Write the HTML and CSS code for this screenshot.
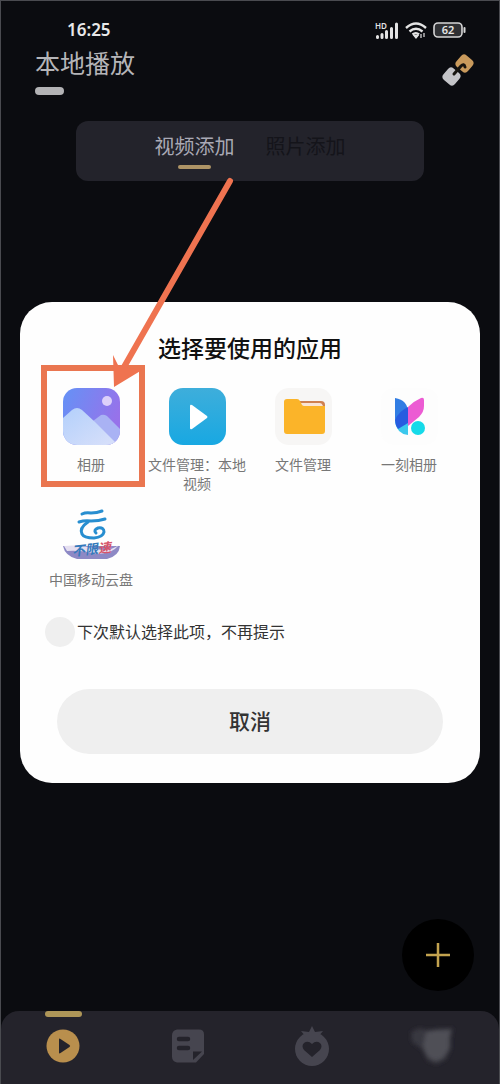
FILE: index.html
```
<!DOCTYPE html>
<html lang="zh-CN">

<head>
    <meta charset="UTF-8">
    <meta name="viewport" content="width=device-width, initial-scale=1.0">
    <title>本地播放</title>

    <link rel="stylesheet" href="styles.css">
</head>

<body>
    <div class="statusbar">
        <span class="time">16:25</span>
        <div class="signals">
            <svg width="25" height="22" viewBox="0 0 25 22">
                <text class="hd" x="1" y="10">HD</text>
                <path d="M3.500 18.500v-1M8 18.500v-3M12.500 18.500v-6M17.500 18.500v-9M22.500 18.500V5" stroke="#e4e4e4" stroke-width="3" stroke-linecap="round" />
            </svg>
            <svg width="22" height="18" viewBox="0 0 22 18" fill="none" stroke="#e4e4e4" stroke-width="2.400">
                <path d="M1 7Q11-2 21 7M4.500 10.500Q11 5 17.500 10.500M7.500 13.500Q11 11 14 13.500" />
                <path d="M9 14.500h4L11 17zM16 13v4M19 12v4" stroke-width="1.200" fill="#e4e4e4" />
            </svg>
            <svg width="33" height="16" viewBox="0 0 33 16">
                <rect x="1" y="1" width="28" height="14" rx="4" fill="#303134" stroke="#d6d6d6" stroke-width="1.600" />
                <path d="M31.500 6v4" stroke="#d6d6d6" stroke-width="2" stroke-linecap="round" />
                <text class="level" x="15" y="12" text-anchor="middle">62</text>
            </svg>
        </div>
    </div>

    <header class="header">
        <h1>本地播放</h1>
        <button type="button" class="link" aria-label="链接">
            <svg width="32" height="32" viewBox="0 0 32 32">
                <rect x="15" y="2" width="15" height="15" rx="4" transform="rotate(40 22.500 9.500)" fill="#c99a5c" />
                <rect x="2" y="15" width="15" height="15" rx="4" transform="rotate(40 9.500 22.500)" fill="#c4c4c8" />
                <path d="M12 20l7-8q3-3 4 1" fill="none" stroke="#17140f" stroke-width="3" stroke-linecap="round" />
            </svg>
        </button>
    </header>

    <div class="tabs">
        <button type="button" class="tab active">视频添加</button>
        <button type="button" class="tab">照片添加</button>
    </div>

    <button type="button" class="fab" aria-label="添加">
        <svg width="26" height="26" viewBox="0 0 26 26">
            <path d="M13 1v24M1 13h24" stroke="#c3a34f" stroke-width="2.500" />
        </svg>
    </button>

    <nav class="nav">
        <a href="#" class="active" aria-label="播放">
            <svg width="34" height="34" viewBox="0 0 34 34">
                <circle cx="17" cy="17" r="16.500" fill="#b98f4d" />
                <path d="M13 10.500v13q0 1.500 1.500.500l9-6q1.200-1 0-2l-9-6q-1.500-1-1.500.500z" fill="#24232b" />
            </svg>
        </a>
        <a href="#" aria-label="列表">
            <svg width="34" height="34" viewBox="0 0 34 34">
                <path d="M6 0.500h22q5 0 5 5V25L25 33.500H6q-5-1-5-6v-21q0-5 5-6z" fill="#46454f" />
                <path d="M8 10h9M8 19h9" stroke="#24232b" stroke-width="4.500" stroke-linecap="round" />
                <path d="M22 31v-8.500h9z" fill="#24232b" />
            </svg>
        </a>
        <a href="#" aria-label="喜欢">
            <svg width="36" height="40" viewBox="0 0 36 40">
                <circle cx="18" cy="23" r="17" fill="#46454f" />
                <path d="M7 5l8 1 3-6 3 6 8-1-5 6H12z" fill="#46454f" />
                <path d="M18 31l-8-7q-3-4 0-7 4-3 8 1 4-4 8-1 3 3 0 7z" fill="#24232b" />
            </svg>
        </a>
        <a href="#" class="me" aria-label="我的">
            <svg width="60" height="44" viewBox="0 0 60 44">
                <defs>
                    <filter id="soft">
                        <feGaussianBlur stdDeviation="2" />
                    </filter>
                </defs>
                <g filter="url(#soft)">
                    <path d="M12 8l8-4 8 2 12-1 14-1-2 9 0 11-5 11-9 5-9-3-6-12-10-7z" fill="#38373f" />
                    <path d="M27 8l11-2h14l-2 8 0 11-6 9-8 3-8-5-4-10z" fill="#505057" />
                </g>
            </svg>
        </a>
    </nav>

    <div class="overlay">
        <div class="dialog" role="dialog" aria-labelledby="dialogTitle">
            <h2 id="dialogTitle">选择要使用的应用</h2>

            <div class="apps">
                <button type="button" class="app selected">
                    <svg width="57" height="57" viewBox="0 0 57 57">
                        <defs>
                            <linearGradient id="sky" x1="0" x2="1" y1="0" y2="0.4">
                                <stop offset="0" stop-color="#6492f6" />
                                <stop offset="1" stop-color="#9772ea" />
                            </linearGradient>
                            <linearGradient id="hill" x1="0" x2="1" y1="0" y2="1">
                                <stop offset="0" stop-color="#b3d0fb" />
                                <stop offset="1" stop-color="#d9e0fa" />
                            </linearGradient>
                            <clipPath id="rounded">
                                <rect width="57" height="57" rx="14" />
                            </clipPath>
                        </defs>
                        <g clip-path="url(#rounded)">
                            <rect width="57" height="57" fill="url(#sky)" />
                            <path d="M30 33l8-6q3-1 6 1l13 13v16H30z" fill="#a9b2f4" />
                            <path d="M0 30l9-8q5-4 10 0l13 12 22 22v1H0z" fill="url(#hill)" />
                            <circle cx="44" cy="13" r="5" fill="#ddd0fa" />
                        </g>
                    </svg>
                    <span>相册</span>
                </button>
                <button type="button" class="app">
                    <svg width="57" height="57" viewBox="0 0 57 57">
                        <defs>
                            <linearGradient id="blue" x1="0" x2="0" y1="0" y2="1">
                                <stop offset="0" stop-color="#3eaedb" />
                                <stop offset="1" stop-color="#18a8e2" />
                            </linearGradient>
                        </defs>
                        <rect width="57" height="57" rx="14" fill="url(#blue)" />
                        <path d="M21 18v22q0 2 2 1l15-11q1-1 0-2L23 17q-2-1-2 1z" fill="#fff" />
                    </svg>
                    <span>文件管理：本地视频</span>
                </button>
                <button type="button" class="app">
                    <svg width="57" height="57" viewBox="0 0 57 57">
                        <rect width="57" height="57" rx="14" fill="#f7f6f5" />
                        <path d="M22 13h24q4 0 4 4v20H22z" fill="#cf8050" />
                        <path d="M25 15h20q2 0 3 3v8H25z" fill="#f9e4d5" />
                        <path d="M9 14q0-3 3-3h10q2 0 3 2l2 4q1 1 2 1h21v25q0 3-3 3H12q-3 0-3-3z" fill="#fbb429" />
                    </svg>
                    <span>文件管理</span>
                </button>
                <button type="button" class="app">
                    <svg width="57" height="57" viewBox="0 0 57 57">
                        <rect width="57" height="57" rx="14" fill="#fdfdfd" />
                        <path d="M27 19q6-6 13-9 3-1 3 2v6q0 6-5 11l-11 9z" fill="#ec5bd3" />
                        <path d="M14 10q13 2 13 15v8L18 41q-4-4-4-11z" fill="#317de3" />
                        <path d="M27 27v20q-11-1-13-13z" fill="#3bc8ed" />
                        <path d="M27 19v16L17 41q-3-4-3-9 4-9 13-13z" fill="#275ce0" />
                        <circle cx="37" cy="40" r="7" fill="#15dae9" />
                    </svg>
                    <span>一刻相册</span>
                </button>
                <button type="button" class="app">
                    <svg width="57" height="57" viewBox="0 0 57 57">
                        <g fill="none" stroke="#278ed0" stroke-linecap="round">
                            <path d="M19 11q4-2 9-1 6 0 11-2" stroke-width="3" />
                            <path d="M16 19q6-2 12-1 8 0 14-2" stroke-width="3" />
                            <path d="M25 19q-9 6-6 12 2 4 12 4 9-1 10-6 0-5-6-4-5 2-2 5" stroke-width="3" />
                        </g>
                        <path d="M0 43h57q-1 10-13 13H14Q2 53 0 43z" fill="#8d89c5" />
                        <path d="M1 43q16-2 33 3 12 3 22-4-9 11-26 8-14-3-26-2z" fill="#e5dff0" />
                        <text class="slogan" x="9" y="51" transform="rotate(-6 28 47)"><tspan fill="#347abc">不限</tspan><tspan fill="#d7566b">速</tspan></text>
                    </svg>
                    <span>中国移动云盘</span>
                </button>
            </div>

            <label class="remember">
                <input type="checkbox">
                <span>下次默认选择此项，不再提示</span>
            </label>

            <button type="button" class="cancel">取消</button>

            <!-- pointer to the album app -->
            <svg class="arrow" width="124" height="214" viewBox="0 0 124 214">
                <path d="M118 5L12 191" stroke="#ef7350" stroke-width="6" stroke-linecap="round" />
                <path d="M1 179l1 32 28-17-15-2-8-1z" fill="#ef7350" />
            </svg>
        </div>
    </div>
</body>

</html>
```
FILE: styles.css
```
*,
*::before,
*::after {
    box-sizing: border-box;
}

body {
    margin: 0;
    min-height: 100vh;
    display: flex;
    flex-direction: column;
    background: #0b0c10;
    border: 1px solid #4a4b50;
    border-width: 1px 1px 0;
    font-family: "Noto Sans", "Noto Sans CJK SC", sans-serif;
    color: #b5b5b8;
}

button {
    border: 0;
    padding: 0;
    background: none;
    font-family: inherit;
    color: inherit;
}

svg {
    display: block;
    flex: none;
}

.statusbar {
    display: flex;
    justify-content: space-between;
    align-items: center;
    padding: 18px 33px 0 66px;
}

.time {
    font-size: 17px;
    line-height: 22px;
    font-weight: 600;
    color: #e8e8e8;
}

.signals {
    display: flex;
    align-items: center;
    gap: 6px;
}

.hd {
    font-size: 8px;
    font-weight: 600;
    fill: #e4e4e4;
}

.level {
    font-size: 11px;
    font-weight: 600;
    fill: #e8e8e8;
}

.header {
    display: flex;
    justify-content: space-between;
    align-items: center;
    padding: 4px 25px 0 34px;
}

.header h1 {
    margin: 0;
    font-size: 25px;
    line-height: 36px;
    font-weight: 400;
}

.header h1::after {
    content: "";
    display: block;
    width: 29px;
    height: 8px;
    margin-top: 6px;
    border-radius: 4px;
    background: #b3b3b5;
}

.tabs {
    display: flex;
    justify-content: center;
    gap: 31px;
    margin: 26px 75px 0;
    height: 60px;
    border-radius: 12px;
    background: #23232b;
}

.tab {
    display: flex;
    flex-direction: column;
    align-items: center;
    padding-top: 12px;
    font-size: 20px;
    line-height: 28px;
    color: #14141a;
}

.tab.active {
    color: #a9a9b5;
}

.tab.active::after {
    content: "";
    width: 33px;
    height: 4px;
    margin-top: 4px;
    border-radius: 2px;
    background: #ae9466;
}

.fab {
    display: flex;
    align-items: center;
    justify-content: center;
    width: 72px;
    height: 72px;
    margin: auto 25px 20px auto;
    border-radius: 50%;
    background: #000;
}

.nav {
    display: grid;
    grid-template-columns: repeat(4, 1fr);
    height: 73px;
    border-radius: 18px 18px 0 0;
    background: #24232b;
}

.nav a {
    position: relative;
    display: flex;
    align-items: center;
    justify-content: center;
    padding-bottom: 3px;
}

.nav a.active::before {
    content: "";
    position: absolute;
    top: 0;
    width: 37px;
    height: 6px;
    border-radius: 3px;
    background: #ae9658;
}

.nav a.me {
    padding-right: 16px;
}

.overlay {
    position: fixed;
    inset: 0;
    display: flex;
    align-items: center;
    justify-content: center;
    padding: 0 20px;
}

.dialog {
    position: relative;
    width: 100%;
    padding: 30px 18px 29px;
    border-radius: 32px;
    background: #fefefe;
}

.dialog h2 {
    margin: 0 0 24px;
    font-size: 23px;
    line-height: 32px;
    font-weight: 500;
    text-align: center;
    color: #111;
}

.apps {
    display: grid;
    grid-template-columns: repeat(4, 1fr);
    row-gap: 10px;
}

.app {
    position: relative;
    display: flex;
    flex-direction: column;
    align-items: center;
    gap: 10px;
    font-size: 14px;
    line-height: 19px;
    color: #777;
}

.app.selected::after {
    content: "";
    position: absolute;
    top: -23px;
    left: 3px;
    width: 104px;
    height: 122px;
    border: 6px solid #ea7650;
}

.slogan {
    font-size: 13px;
    font-weight: 700;
    font-style: italic;
}

.remember {
    display: flex;
    align-items: center;
    gap: 2px;
    margin: 28px 7px 42px;
    font-size: 16px;
    line-height: 30px;
    color: #333;
}

.remember input {
    appearance: none;
    width: 30px;
    height: 30px;
    margin: 0;
    border-radius: 50%;
    background: #efefef;
}

.cancel {
    display: block;
    width: calc(100% - 38px);
    margin: 0 auto;
    font-size: 21px;
    line-height: 65px;
    border-radius: 33px;
    font-weight: 500;
    background: #efefef;
    color: #333;
}

.arrow {
    position: absolute;
    top: -126px;
    left: 92px;
    pointer-events: none;
}
```
